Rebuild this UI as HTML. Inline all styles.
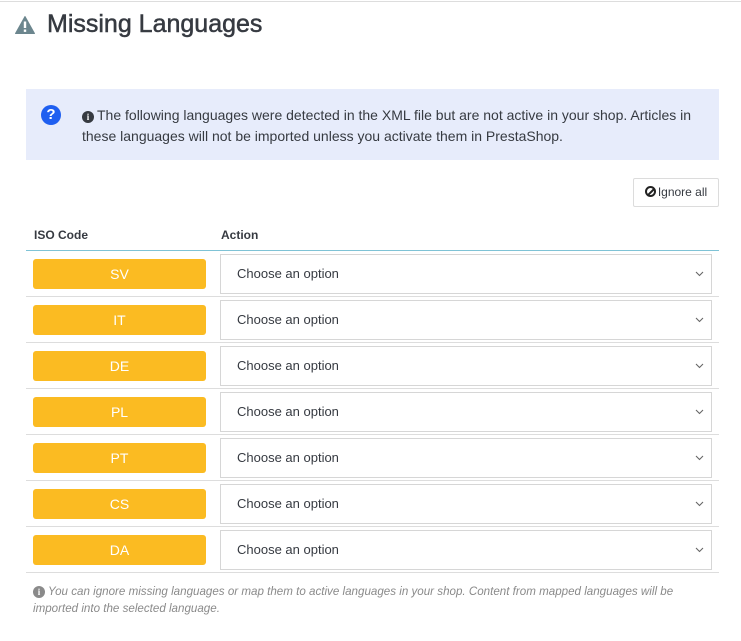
<!DOCTYPE html>
<html><head><meta charset="utf-8"><style>
*{box-sizing:border-box;margin:0;padding:0}
body{width:741px;height:641px;background:#fff;font-family:"Liberation Sans",sans-serif;position:relative;overflow:hidden;color:#363a41}
.topline{position:absolute;left:0;top:1px;width:741px;height:1px;background:#ddd}
h1{position:absolute;left:47px;top:10px;font-size:25px;font-weight:normal;color:#363a41;-webkit-text-stroke:0.5px #363a41}
.alert{position:absolute;left:26px;top:89px;width:693px;height:71px;background:#e7ecfb}
.alert .q{position:absolute;left:15px;top:16px;width:20px;height:20px;border-radius:50%;background:#1f5ff0;color:#fff;font-weight:bold;font-size:15px;text-align:center;line-height:20px}
.alert p{position:absolute;left:56px;top:16px;width:630px;font-size:14px;line-height:21px;color:#363a41}
.ic{display:inline-block;width:12px;height:12px;border-radius:50%;background:#363a41;color:#fff;font-size:9px;font-weight:bold;text-align:center;line-height:12px;font-family:"Liberation Serif",serif;vertical-align:0px;margin-right:3px}
.btn{position:absolute;left:633px;top:178px;width:86px;height:29px;border:1px solid #dcdcdc;border-radius:2px;font-size:12px;line-height:27px;text-align:center;color:#363a41}
.btn .no{display:inline-block;width:11px;height:11px;border:2px solid #222;border-radius:50%;position:relative;vertical-align:-1px;margin-right:2px}
.btn .no:after{content:"";position:absolute;left:3px;top:-1px;width:1.6px;height:10px;background:#222;transform:rotate(45deg)}
.th{position:absolute;top:228px;font-size:12px;font-weight:bold;color:#363a41}
.hline{position:absolute;left:26px;top:250px;width:693px;height:1px;background:#7fc3d6}
.row{position:absolute;left:26px;width:693px;height:46px;border-bottom:1px solid #ddd}
.badge{position:absolute;left:7px;top:8px;width:173px;height:30px;background:#fbbb22;border-radius:3px;color:#fff;font-size:14px;text-align:center;line-height:30px}
.sel{position:absolute;left:194px;top:3px;width:492px;height:40px;border:1px solid #d6d6d6;font-size:13px;line-height:38px;padding-left:16px;color:#363a41}
.sel svg{position:absolute;right:7px;top:16px}
.foot{position:absolute;left:33px;top:583px;width:680px;font-size:11.6px;line-height:17px;color:#8a8a8a;font-style:italic}
.foot .ic{background:#8a8a8a;font-style:normal}
</style></head><body>
<div class="topline"></div>
<svg style="position:absolute;left:15px;top:16px" width="20" height="18" viewBox="0 0 20 18"><path d="M10 0.5 L19.5 17.5 L0.5 17.5 Z" fill="#6c868e" stroke="#6c868e" stroke-linejoin="round"/><rect x="8.8" y="5.5" width="2.4" height="6.5" fill="#fff"/><rect x="8.8" y="13.5" width="2.4" height="2.4" fill="#fff"/></svg>
<h1>Missing Languages</h1>
<div class="alert"><div class="q">?</div><p><span class="ic">i</span>The following languages were detected in the XML file but are not active in your shop. Articles in these languages will not be imported unless you activate them in PrestaShop.</p></div>
<div class="btn"><span class="no"></span>Ignore all</div>
<div class="th" style="left:34px">ISO Code</div>
<div class="th" style="left:221px">Action</div>
<div class="hline"></div>
<div class="row" style="top:251px"><div class="badge">SV</div><div class="sel">Choose an option<svg width="9" height="6"><path d="M1 1L4.5 4.5L8 1" fill="none" stroke="#666" stroke-width="1.1"/></svg></div></div>
<div class="row" style="top:297px"><div class="badge">IT</div><div class="sel">Choose an option<svg width="9" height="6"><path d="M1 1L4.5 4.5L8 1" fill="none" stroke="#666" stroke-width="1.1"/></svg></div></div>
<div class="row" style="top:343px"><div class="badge">DE</div><div class="sel">Choose an option<svg width="9" height="6"><path d="M1 1L4.5 4.5L8 1" fill="none" stroke="#666" stroke-width="1.1"/></svg></div></div>
<div class="row" style="top:389px"><div class="badge">PL</div><div class="sel">Choose an option<svg width="9" height="6"><path d="M1 1L4.5 4.5L8 1" fill="none" stroke="#666" stroke-width="1.1"/></svg></div></div>
<div class="row" style="top:435px"><div class="badge">PT</div><div class="sel">Choose an option<svg width="9" height="6"><path d="M1 1L4.5 4.5L8 1" fill="none" stroke="#666" stroke-width="1.1"/></svg></div></div>
<div class="row" style="top:481px"><div class="badge">CS</div><div class="sel">Choose an option<svg width="9" height="6"><path d="M1 1L4.5 4.5L8 1" fill="none" stroke="#666" stroke-width="1.1"/></svg></div></div>
<div class="row" style="top:527px"><div class="badge">DA</div><div class="sel">Choose an option<svg width="9" height="6"><path d="M1 1L4.5 4.5L8 1" fill="none" stroke="#666" stroke-width="1.1"/></svg></div></div>
<div class="foot"><span class="ic">i</span>You can ignore missing languages or map them to active languages in your shop. Content from mapped languages will be imported into the selected language.</div>
</body></html>
